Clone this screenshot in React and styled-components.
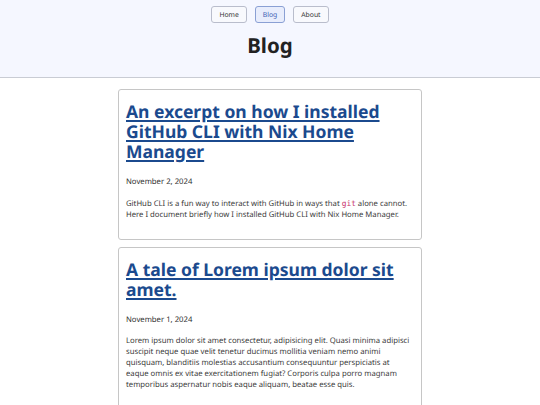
import React from 'react'
import styled, { createGlobalStyle } from 'styled-components'

const GlobalStyle = createGlobalStyle`
    html, body {
        margin: 0;
        padding: 0;
        background: #ffffff;
        font-family: "Noto Sans", "Open Sans", sans-serif;
        color: #2b2b2b;
        text-rendering: geometricPrecision;
    }
`

const Header = styled.header`
    background: #f5f7ff;
    border-bottom: 1px solid #c9ccd4;
    padding: 6px 0 17px;
    text-align: center;
`

const Nav = styled.nav`
    display: flex;
    justify-content: center;
    gap: 8px;
`

const NavButton = styled.a`
    display: inline-flex;
    align-items: center;
    height: 17px;
    box-sizing: border-box;
    padding: 0 7px;
    font-size: 6.8px;
    border-radius: 3px;
    text-decoration: none;
    border: 1px solid ${props => props.$active ? '#8aa0d4' : '#b9bdcc'};
    background: ${props => props.$active ? '#e8edfc' : '#f8f9fd'};
    color: ${props => props.$active ? '#3d5fb4' : '#333333'};
`

const PageTitle = styled.h1`
    margin: 9px 0 0;
    font-size: 20.5px;
    font-weight: 700;
    color: #222222;
`

const Main = styled.main`
    display: flex;
    flex-direction: column;
    align-items: center;
    gap: 7px;
    padding: 11px 0 20px;
`

const Card = styled.article`
    width: 304px;
    box-sizing: border-box;
    border: 1px solid #c6c6c6;
    border-radius: 3px;
    padding: 12px 9px 18px 7px;
`

const PostTitle = styled.h2`
    margin: 0 0 15px;
    font-size: 17.5px;
    line-height: 20px;
    font-weight: 700;

    a {
        color: #1b4a8e;
        text-decoration: underline;
        text-decoration-thickness: 1.5px;
        text-underline-offset: 2px;
    }
`

const PostDate = styled.p`
    margin: 0 0 10px;
    font-size: 7.73px;
    line-height: 11px;
    color: #2f2f2f;
`

const Excerpt = styled.p`
    margin: 0;
    font-size: 7.73px;
    line-height: 11px;
    color: #3a3a3a;
`

const Code = styled.code`
    font-family: "DejaVu Sans Mono", "Liberation Mono", monospace;
    font-size: 7.8px;
    color: #c8336e;
`

const posts = [
    {
        title: 'An excerpt on how I installed GitHub CLI with Nix Home Manager',
        date: 'November 2, 2024',
        body: (
            <>
                GitHub CLI is a fun way to interact with GitHub in ways that <Code>git</Code> alone cannot.
                Here I document briefly how I installed GitHub CLI with Nix Home Manager.
            </>
        ),
    },
    {
        title: 'A tale of Lorem ipsum dolor sit amet.',
        date: 'November 1, 2024',
        body: 'Lorem ipsum dolor sit amet consectetur, adipisicing elit. Quasi minima adipisci suscipit neque quae velit tenetur ducimus mollitia veniam nemo animi quisquam, blanditiis molestias accusantium consequuntur perspiciatis at eaque omnis ex vitae exercitationem fugiat? Corporis culpa porro magnam temporibus aspernatur nobis eaque aliquam, beatae esse quis.',
    },
]

const App = () => {
    return (
        <>
            <GlobalStyle />
            <Header>
                <Nav>
                    <NavButton href="#">Home</NavButton>
                    <NavButton href="#" $active>Blog</NavButton>
                    <NavButton href="#">About</NavButton>
                </Nav>
                <PageTitle>Blog</PageTitle>
            </Header>
            <Main>
                {posts.map((p, i) => {
                    return (
                        <Card key={i}>
                            <PostTitle><a href="#">{p.title}</a></PostTitle>
                            <PostDate>{p.date}</PostDate>
                            <Excerpt>{p.body}</Excerpt>
                        </Card>
                    )
                })}
            </Main>
        </>
    )
}

export default App
